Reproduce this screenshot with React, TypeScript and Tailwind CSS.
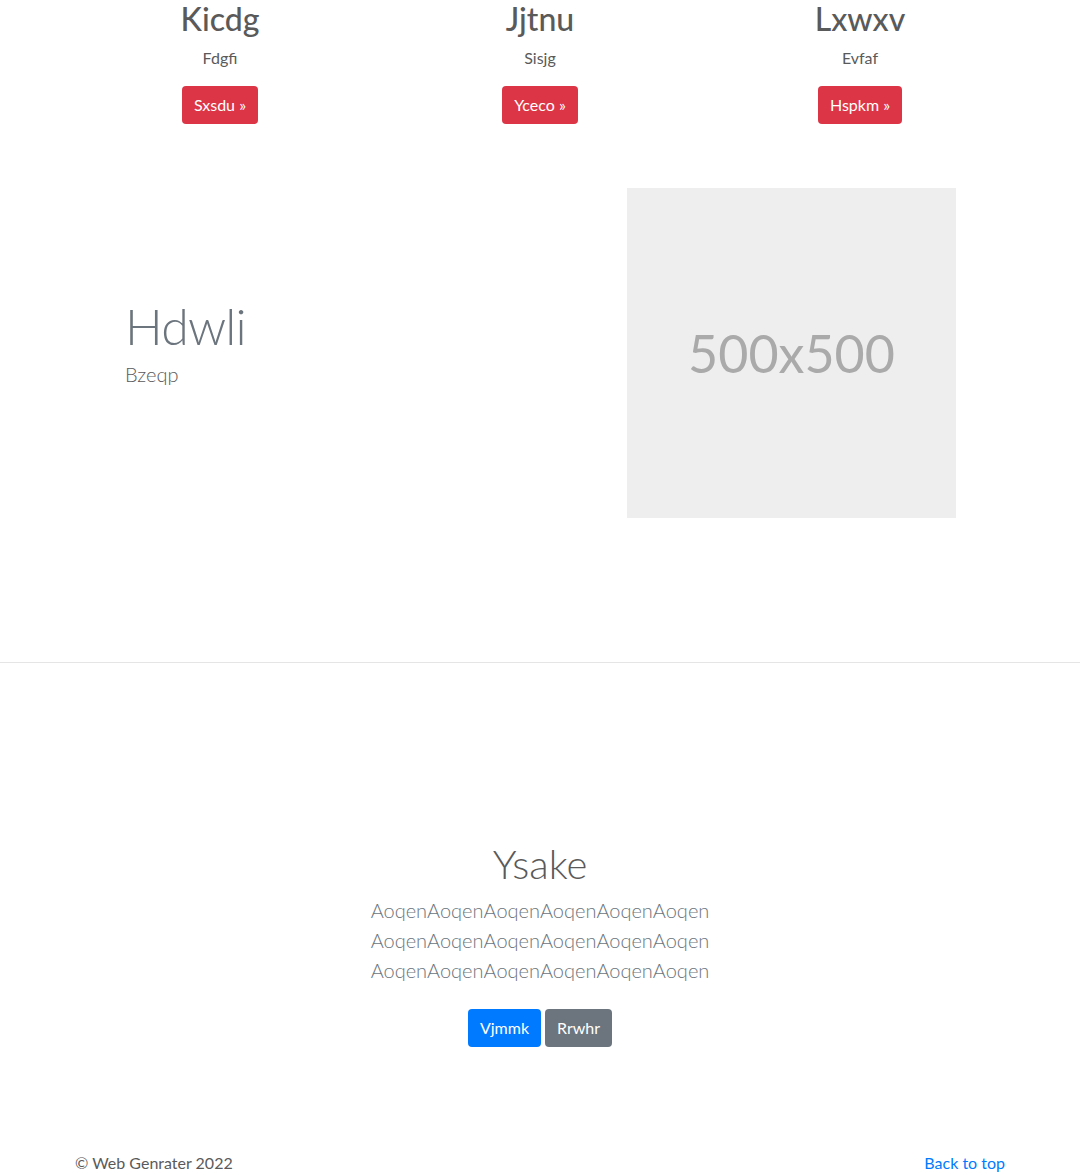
import React from 'react';

const font = { fontFamily: 'Lato, "Liberation Sans", sans-serif' };

const features = [
  { title: 'Kicdg', text: 'Fdgfi', cta: 'Sxsdu' },
  { title: 'Jjtnu', text: 'Sisjg', cta: 'Yceco' },
  { title: 'Lxwxv', text: 'Evfaf', cta: 'Hspkm' },
];

const App = () => {
  return (
    <div className="min-h-[1175px] bg-white text-[#5a5a5a]" style={font}>
      {/* Marketing columns */}
      <div className="w-[960px] mx-auto grid grid-cols-3 text-center">
        {features.map((f) => (
          <div key={f.title} className="px-[15px]">
            <h2 className="text-[32px] font-medium leading-[1.2] mb-2">{f.title}</h2>
            <p className="text-base leading-6 mb-4">{f.text}</p>
            <p className="mb-4">
              <button className="bg-[#dc3545] text-white text-base leading-6 px-3 py-[7px] rounded">
                {f.cta} &raquo;
              </button>
            </p>
          </div>
        ))}
      </div>

      {/* Featurette */}
      <div className="w-[960px] mx-auto px-[15px] mt-12 mb-[144px] flex items-center">
        <div className="flex-1 pl-[50px]">
          <h2 className="text-[50px] font-light leading-none tracking-[-0.8px] text-[#6c757d] mb-2">Hdwli</h2>
          <p className="text-xl font-light leading-[1.5] mb-4">Bzeqp</p>
        </div>
        <div className="w-[329px] h-[330px] mr-[49px] bg-[#eeeeee] flex items-center justify-center">
          <span className="text-[52px] text-[#aaaaaa]">500x500</span>
        </div>
      </div>

      <hr className="border-0 border-t border-[#e5e5e5]" />

      {/* Jumbotron */}
      <section className="text-center pt-[177px]">
        <h1 className="text-[40px] font-light leading-[1.2] mb-[7px]">Ysake</h1>
        <p className="text-xl font-light leading-[1.5] text-[#6c757d] mb-4">
          AoqenAoqenAoqenAoqenAoqenAoqen
          <br />
          AoqenAoqenAoqenAoqenAoqenAoqen
          <br />
          AoqenAoqenAoqenAoqenAoqenAoqen
        </p>
        <div className="flex justify-center gap-1 pt-2">
          <button className="bg-[#007bff] text-white text-base leading-6 px-3 py-[7px] rounded">Vjmmk</button>
          <button className="bg-[#6c757d] text-white text-base leading-6 px-3 py-[7px] rounded">Rrwhr</button>
        </div>
      </section>

      {/* Footer */}
      <footer className="w-[960px] mx-auto px-[15px] mt-[104px] flex justify-between text-base leading-6">
        <p>&copy; Web Genrater 2022</p>
        <a href="#" className="text-[#007bff]">Back to top</a>
      </footer>
    </div>
  );
};

export default App;
